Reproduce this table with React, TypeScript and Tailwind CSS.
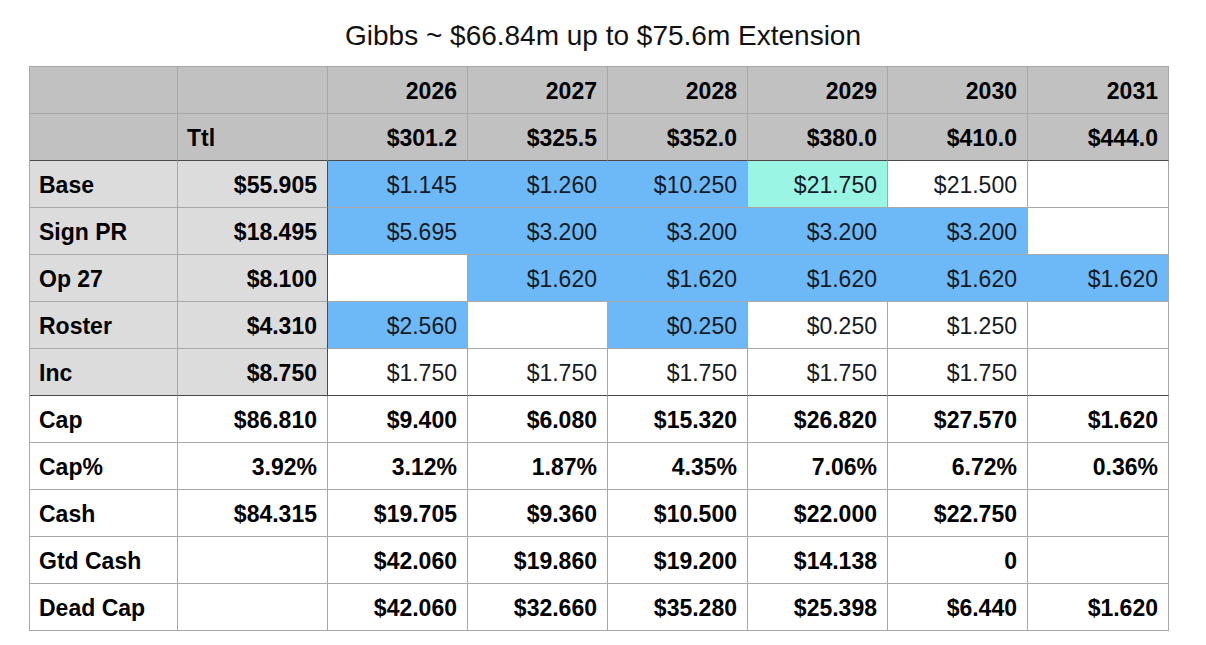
const years = ['2026', '2027', '2028', '2029', '2030', '2031']
const caps = ['$301.2', '$325.5', '$352.0', '$380.0', '$410.0', '$444.0']

// b = blue, t = teal, '' = white
type Cell = { v: string; c?: 'b' | 't' }

const detailRows: { label: string; total: string; cells: Cell[] }[] = [
  {
    label: 'Base',
    total: '$55.905',
    cells: [
      { v: '$1.145', c: 'b' },
      { v: '$1.260', c: 'b' },
      { v: '$10.250', c: 'b' },
      { v: '$21.750', c: 't' },
      { v: '$21.500' },
      { v: '' },
    ],
  },
  {
    label: 'Sign PR',
    total: '$18.495',
    cells: [
      { v: '$5.695', c: 'b' },
      { v: '$3.200', c: 'b' },
      { v: '$3.200', c: 'b' },
      { v: '$3.200', c: 'b' },
      { v: '$3.200', c: 'b' },
      { v: '' },
    ],
  },
  {
    label: 'Op 27',
    total: '$8.100',
    cells: [
      { v: '' },
      { v: '$1.620', c: 'b' },
      { v: '$1.620', c: 'b' },
      { v: '$1.620', c: 'b' },
      { v: '$1.620', c: 'b' },
      { v: '$1.620', c: 'b' },
    ],
  },
  {
    label: 'Roster',
    total: '$4.310',
    cells: [
      { v: '$2.560', c: 'b' },
      { v: '' },
      { v: '$0.250', c: 'b' },
      { v: '$0.250' },
      { v: '$1.250' },
      { v: '' },
    ],
  },
  {
    label: 'Inc',
    total: '$8.750',
    cells: [
      { v: '$1.750' },
      { v: '$1.750' },
      { v: '$1.750' },
      { v: '$1.750' },
      { v: '$1.750' },
      { v: '' },
    ],
  },
]

const summaryRows: { label: string; total: string; cells: string[] }[] = [
  { label: 'Cap', total: '$86.810', cells: ['$9.400', '$6.080', '$15.320', '$26.820', '$27.570', '$1.620'] },
  { label: 'Cap%', total: '3.92%', cells: ['3.12%', '1.87%', '4.35%', '7.06%', '6.72%', '0.36%'] },
  { label: 'Cash', total: '$84.315', cells: ['$19.705', '$9.360', '$10.500', '$22.000', '$22.750', ''] },
  { label: 'Gtd Cash', total: '', cells: ['$42.060', '$19.860', '$19.200', '$14.138', '0', ''] },
  { label: 'Dead Cap', total: '', cells: ['$42.060', '$32.660', '$35.280', '$25.398', '$6.440', '$1.620'] },
]

const base = 'h-[47px] flex items-center pt-[2px] border-r border-b border-[#a8a8a8]'
// year columns are 140px, the last one a pixel wider
const yearW = (j: number) => (j === 5 ? 'w-[141px]' : 'w-[140px]')

export default function App() {
  return (
    <div className="w-[1206px] h-[645px] bg-white text-black font-['Liberation_Sans',Arial,sans-serif]">
      <div className="h-[66px] flex items-center justify-center text-[28px] pt-[5px] text-[#111]">
        Gibbs ~ $66.84m up to $75.6m Extension
      </div>

      <div className="ml-[29px] w-[1140px] border-t border-l border-[#a8a8a8] text-[23px]">
        {/* Header: years */}
        <div className="flex bg-[#c0c1c0] font-bold">
          <div className={`${base} w-[148px]`} />
          <div className={`${base} w-[150px]`} />
          {years.map((y, j) => (
            <div key={y} className={`${base} ${yearW(j)} justify-end pr-[10px]`}>{y}</div>
          ))}
        </div>

        {/* Header: cap totals */}
        <div className="flex bg-[#c0c1c0] font-bold">
          <div className={`${base} w-[148px] border-b-[#4a4a4a]`} />
          <div className={`${base} w-[150px] pl-[9px] border-b-[#4a4a4a]`}>Ttl</div>
          {caps.map((c, j) => (
            <div key={c} className={`${base} ${yearW(j)} justify-end pr-[10px] border-b-[#4a4a4a]`}>{c}</div>
          ))}
        </div>

        {/* Detail rows */}
        {detailRows.map((r, i) => {
          const last = i === detailRows.length - 1
          return (
            <div key={r.label} className="flex">
              <div className={`${base} w-[148px] bg-[#dcdcdc] font-bold pl-[9px] ${last ? 'border-b-[#4a4a4a]' : ''}`}>
                {r.label}
              </div>
              <div
                className={`${base} w-[150px] bg-[#dcdcdc] font-bold justify-end pr-[10px] border-r-[#4a4a4a] ${last ? 'border-b-[#4a4a4a]' : ''}`}
              >
                {r.total}
              </div>
              {r.cells.map((cell, j) => (
                <div
                  key={j}
                  className={`${base} ${yearW(j)} justify-end pr-[10px] text-[#151a24] ${
                    cell.c === 'b' ? 'bg-[#6db9f8]' : cell.c === 't' ? 'bg-[#9af5e5]' : 'bg-white'
                  } ${last ? 'border-b-[#4a4a4a]' : ''}`}
                >
                  {cell.v}
                </div>
              ))}
            </div>
          )
        })}

        {/* Summary rows */}
        {summaryRows.map((r) => (
          <div key={r.label} className="flex font-bold">
            <div className={`${base} w-[148px] pl-[9px]`}>{r.label}</div>
            <div className={`${base} w-[150px] justify-end pr-[10px]`}>{r.total}</div>
            {r.cells.map((v, j) => (
              <div key={j} className={`${base} ${yearW(j)} justify-end pr-[10px]`}>{v}</div>
            ))}
          </div>
        ))}
      </div>
    </div>
  )
}
